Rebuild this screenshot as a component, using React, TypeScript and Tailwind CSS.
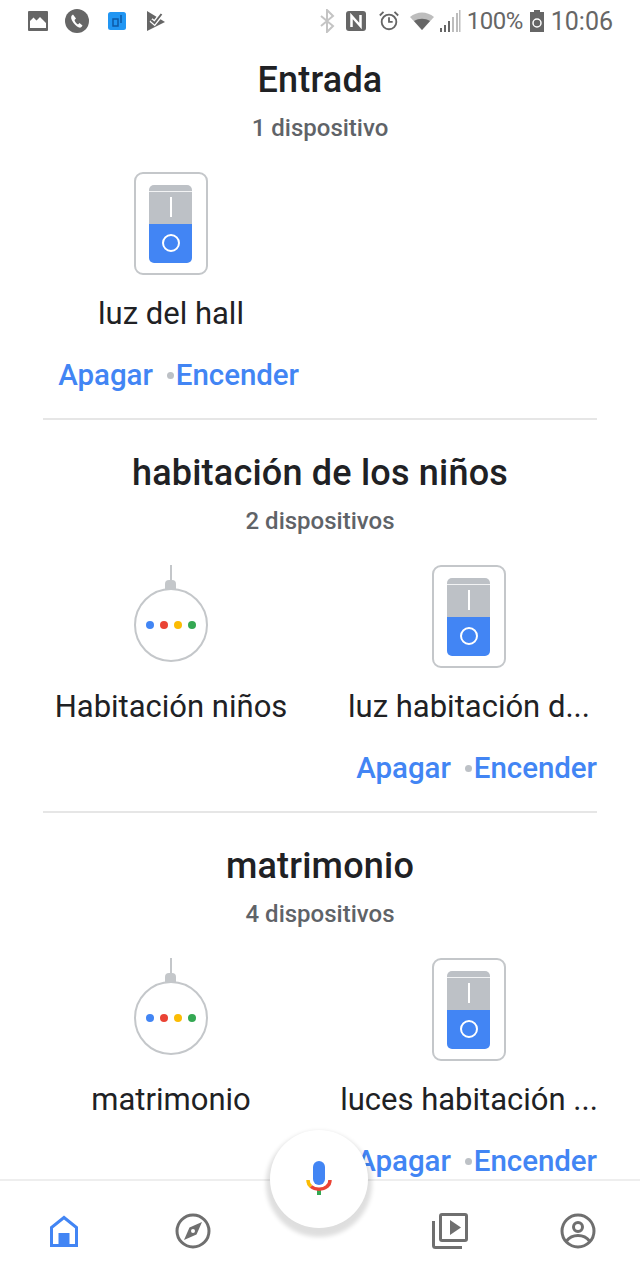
const font = "font-['Roboto',sans-serif]";

function SwitchIcon() {
  return (
    <div className="w-[74px] h-[103px] mr-[1px] rounded-[9px] border-2 border-[#c4c7ca] bg-white flex items-center justify-center">
      <div className="w-[43px] h-[78px] rounded-[5px] overflow-hidden flex flex-col">
        <div className="h-[39px] bg-[#bdc1c6] flex justify-center relative">
          <div className="absolute left-0 right-0 top-[6px] h-px bg-white/80" />
          <div className="w-[2px] h-[20px] mt-[12px] bg-white" />
        </div>
        <div className="flex-1 bg-[#4285f4] flex items-center justify-center">
          <div className="w-[18px] h-[18px] rounded-full border-2 border-white" />
        </div>
      </div>
    </div>
  );
}

function SpeakerIcon() {
  return (
    <div className="h-[103px] mr-[1px] flex flex-col items-center">
      <div className="w-[2px] h-[15px] bg-[#c4c7ca]" />
      <div className="w-[11px] h-[10px] rounded-t-[4px] bg-[#c4c7ca]" />
      <div className="w-[74px] h-[74px] -mt-[2px] rounded-full border-2 border-[#c4c7ca] bg-white flex items-center justify-center gap-[6px]">
        <span className="w-[8px] h-[8px] rounded-full bg-[#4285f4]" />
        <span className="w-[8px] h-[8px] rounded-full bg-[#ea4335]" />
        <span className="w-[8px] h-[8px] rounded-full bg-[#fbbc04]" />
        <span className="w-[8px] h-[8px] rounded-full bg-[#34a853]" />
      </div>
    </div>
  );
}

type Device = { name: string; kind: 'switch' | 'speaker' };

function Actions() {
  return (
    <div className="h-[38px] flex items-center justify-end text-[29.5px] tracking-[-0.05px] font-medium text-[#4285f4] whitespace-nowrap">
      <span>Apagar</span>
      <span className="w-[7px] h-[7px] rounded-full bg-[#bdc1c6] ml-[14px] mr-[2px]" />
      <span>Encender</span>
    </div>
  );
}

function Room({
  title,
  count,
  devices,
  divider = true,
}: {
  title: string;
  count: string;
  devices: Device[];
  divider?: boolean;
}) {
  return (
    <section className="h-[393px] flex flex-col items-center">
      <h2 className="h-[44px] leading-[44px] text-[36px] tracking-[0.2px] font-medium text-[#202124] whitespace-nowrap">
        {title}
      </h2>
      <p className="mt-[11px] h-[30px] leading-[30px] text-[24px] font-medium text-[#5f6368]">{count}</p>
      <div className="mt-[29px] w-[554px] grid grid-cols-[256px_256px] gap-x-[42px]">
        {devices.map((d) => (
          <div key={d.name} className="flex flex-col items-center">
            {d.kind === 'switch' ? <SwitchIcon /> : <SpeakerIcon />}
            <p className="mt-[20px] h-[38px] leading-[38px] text-[31px] text-[#202124] whitespace-nowrap">
              {d.name}
            </p>
            <div className="mt-[23px] h-[38px] w-full">{d.kind === 'switch' && <Actions />}</div>
          </div>
        ))}
      </div>
      {divider && <div className="mt-[24px] w-[554px] h-[2px] bg-[#e6e6e6]" />}
    </section>
  );
}

function StatusBar() {
  return (
    <div className="h-[42px] pl-[28px] pr-[27px] flex items-center justify-between text-[#666]">
      <div className="flex items-center">
        <svg width="20" height="20" viewBox="0 0 20 20" className="mr-[17px]">
          <rect width="20" height="20" rx="1" fill="#666" />
          <path d="M2 17V10l3.500-3.500 3 3L12 6l6 6v5z" fill="#fff" />
        </svg>
        <svg width="24" height="24" viewBox="0 0 24 24" className="mr-[19px]">
          <circle cx="12" cy="12" r="12" fill="#666" />
          <path d="M8 5.500c-2 1-2.500 3-1 6 1.500 3 4.500 6 7 7 1.500.500 3-.500 3.500-2l-3-2.500-1.500 1.500c-1.500-1-3-2.500-3.500-4.500L11 9.500z" fill="#fff" />
        </svg>
        <svg width="18" height="18" viewBox="0 0 18 18" className="mr-[20px]">
          <rect width="18" height="18" rx="2.500" fill="#2196f3" />
          <path d="M5 7h5v7H5zM13 3v8" stroke="#0d5aa7" strokeWidth="1.500" fill="none" />
        </svg>
        <svg width="20" height="20" viewBox="0 0 20 20">
          <path d="M1 0l9 5.500L19 11 1 20z" fill="#666" />
          <path d="M5 9l3.500 3 8-10" stroke="#fff" strokeWidth="4.500" fill="none" />
          <path d="M5 9l3.500 3 7-9" stroke="#666" strokeWidth="2" fill="none" />
        </svg>
      </div>
      <div className="flex items-center">
        <svg width="16" height="24" viewBox="0 0 16 24" className="mr-[11px]" fill="none" stroke="#c4c4c4" strokeWidth="2">
          <path d="M2 7l12 10-6 6V1l6 6L2 17" />
        </svg>
        <svg width="20" height="20" viewBox="0 0 20 20" className="mr-[12px]">
          <rect width="20" height="20" rx="3" fill="#666" />
          <path d="M5.500 16V5l9 10V4" stroke="#fff" strokeWidth="2.500" fill="none" />
        </svg>
        <svg width="22" height="22" viewBox="0 0 24 24" className="mr-[10px]" fill="none" stroke="#666" strokeWidth="2">
          <circle cx="12" cy="13" r="8" />
          <path d="M12 8v5h4M2 6l4-4M22 6l-4-4" />
        </svg>
        <svg width="24" height="18" viewBox="0 0 24 18" className="mr-[5px]">
          <path d="M0 5c7-6 17-6 24 0L12 18z" fill="#bdbdbd" />
          <path d="M4 9c5-3 11-3 16 0l-8 9z" fill="#666" />
        </svg>
        <svg width="22" height="24" viewBox="0 0 22 24" className="mr-[6px]">
          <path d="M1 19v4h2v-4zM5 16v7h2v-7zM9 12v11h2V12z" fill="#666" />
          <path d="M13 8v15h2V8zM17 4v19h2V4zM20 1v22h1.500V1z" fill="#bdbdbd" />
        </svg>
        <span className="w-[55px] text-[24px] leading-none tracking-[-0.5px] whitespace-nowrap mr-[7px]">100%</span>
        <svg width="16" height="24" viewBox="0 0 16 24" className="mr-[6px]">
          <path d="M5 1h6v2h4v20H1V3h4z" fill="#666" />
          <circle cx="8" cy="14" r="4" fill="none" stroke="#fff" strokeWidth="1.500" />
        </svg>
        <span className="text-[25px] leading-none">10:06</span>
      </div>
    </div>
  );
}

function MicIcon() {
  return (
    <svg width="26" height="36" viewBox="0 0 26 36" fill="none">
      <path d="M13 34v-6" stroke="#34a853" strokeWidth="4" />
      <path d="M2 19c0 3 1 5 3 6.500" stroke="#fbbc04" strokeWidth="3.500" />
      <path d="M5 25.500c4 3.500 12 3.500 16 0 2-1.500 3-3.500 3-6.500" stroke="#ea4335" strokeWidth="3.500" />
      <rect x="7" y="0" width="12" height="24" rx="6" fill="#4285f4" />
    </svg>
  );
}

function BottomNav() {
  return (
    <nav className="absolute left-0 right-0 bottom-0 h-[101px] bg-white border-t-2 border-[#eeeeee] flex items-center">
      <div className="w-[128px] flex justify-center">
        <svg width="28" height="32" viewBox="0 0 28 32">
          <path d="M14 2.500L1.500 12.500V30.500h25V12.500z" fill="none" stroke="#4285f4" strokeWidth="3" />
          <rect x="8.500" y="18" width="11" height="13" fill="#4285f4" />
        </svg>
      </div>
      <div className="w-[130px] flex justify-center">
        <svg width="36" height="36" viewBox="0 0 36 36">
          <circle cx="18" cy="18" r="16" fill="none" stroke="#6f6f6f" strokeWidth="3" />
          <path d="M27 9l-5.500 12.500L9 27l5.500-12.500z" fill="#6f6f6f" />
          <circle cx="18" cy="18" r="2" fill="#fff" />
        </svg>
      </div>
      <div className="w-[126px]" />
      <div className="w-[132px] flex justify-center">
        <svg width="36" height="36" viewBox="0 0 36 36">
          <path d="M1.500 8v24.500a2 2 0 002 2H30" fill="none" stroke="#6f6f6f" strokeWidth="3" />
          <rect x="8.500" y="1.500" width="26" height="26" rx="1.500" fill="none" stroke="#6f6f6f" strokeWidth="3" />
          <path d="M18 7l11 7.500L18 22z" fill="#6f6f6f" />
        </svg>
      </div>
      <div className="w-[124px] flex justify-center">
        <svg width="36" height="36" viewBox="0 0 36 36">
          <circle cx="18" cy="18" r="16" fill="none" stroke="#6f6f6f" strokeWidth="3" />
          <circle cx="18" cy="14" r="4.500" fill="none" stroke="#6f6f6f" strokeWidth="3" />
          <path d="M6.500 28c3-4 7-5.500 11.500-5.500S26.500 24 29.500 28" fill="none" stroke="#6f6f6f" strokeWidth="3" />
        </svg>
      </div>
    </nav>
  );
}

export default function App() {
  return (
    <div className={`relative w-[640px] h-[1280px] overflow-hidden bg-white ${font}`}>
      <StatusBar />
      <main className="pt-[16px]">
        <Room title="Entrada" count="1 dispositivo" devices={[{ name: 'luz del hall', kind: 'switch' }]} />
        <Room
          title="habitación de los niños"
          count="2 dispositivos"
          devices={[
            { name: 'Habitación niños', kind: 'speaker' },
            { name: 'luz habitación d...', kind: 'switch' },
          ]}
        />
        <Room
          title="matrimonio"
          count="4 dispositivos"
          divider={false}
          devices={[
            { name: 'matrimonio', kind: 'speaker' },
            { name: 'luces habitación ...', kind: 'switch' },
          ]}
        />
      </main>
      <BottomNav />
      <div className="absolute left-[270px] top-[1130px] w-[98px] h-[98px] rounded-full bg-white shadow-[0_5px_4px_4px_rgba(0,0,0,0.13)] flex items-center justify-center">
        <MicIcon />
      </div>
    </div>
  );
}
